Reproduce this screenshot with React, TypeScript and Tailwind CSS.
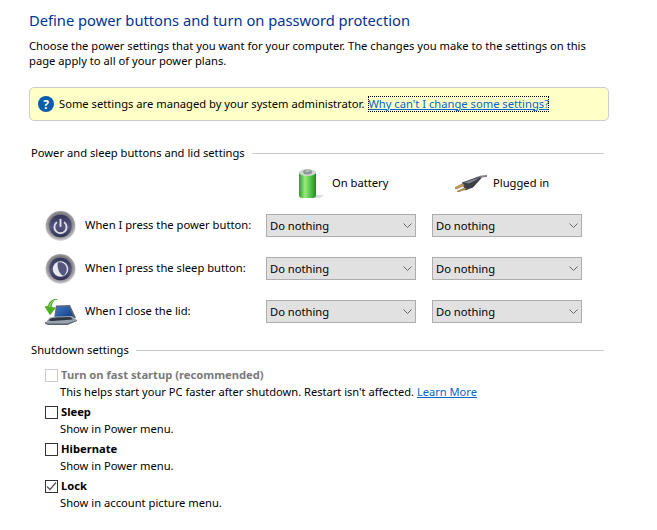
const font = "font-['Noto_Sans','Liberation_Sans',sans-serif]";

function PowerIcon({ moon }: { moon?: boolean }) {
  const id = moon ? "m" : "p";
  return (
    <svg width="31" height="32" viewBox="0 0 32 32" className="shrink-0">
      <defs>
        <radialGradient id={`${id}r`} cx="50%" cy="45%" r="55%">
          <stop offset="65%" stopColor="#77777d" />
          <stop offset="85%" stopColor="#a8a8ac" />
          <stop offset="100%" stopColor="#e4e4e6" />
        </radialGradient>
        <linearGradient id={`${id}d`} x1="0" y1="0" x2="0" y2="1">
          <stop offset="0%" stopColor="#33345a" />
          <stop offset="55%" stopColor="#55577f" />
          <stop offset="100%" stopColor="#2f3052" />
        </linearGradient>
      </defs>
      <circle cx="16" cy="16" r="15.500" fill={`url(#${id}r)`} />
      <circle cx="16" cy="16" r="11.500" fill={`url(#${id}d)`} />
      {moon ? (
        <>
          <circle cx="16" cy="16" r="8" fill="#e8e8ee" />
          <path d="M13 9.500c4-1.500 9 1 9.500 6.500.2 3-1.600 6-3.600 7-2.600-1.200-6.400-5-5.900-13.500z" fill="#55577f" />
        </>
      ) : (
        <g fill="none" stroke="#dcdce6" strokeWidth="2" strokeLinecap="round">
          <path d="M11.700 12.500a6.300 6.300 0 1 0 8.600 0" />
          <path d="M16 9.500v6.500" />
        </g>
      )}
    </svg>
  );
}

function LidIcon() {
  return (
    <svg width="32" height="26" viewBox="0 0 32 26" className="shrink-0">
      <defs>
        <linearGradient id="scr" x1="0" y1="0" x2="1" y2="1">
          <stop offset="0%" stopColor="#3a78c8" />
          <stop offset="100%" stopColor="#123a80" />
        </linearGradient>
      </defs>
      <path d="M11 6.500l14-.5 6 13-22 .5z" fill="#5c6675" />
      <path d="M12.500 8l11.500-.5 4.500 10.500-17.500.5z" fill="url(#scr)" />
      <path d="M5 18.500l6-1 16-.5 5 4-9.500 4.500H3l-3-1.500z" fill="#9aa3ae" />
      <path d="M5.500 19.500l6-1 14-.5 2.500 2.500-21 1.500-3.500-.5z" fill="#2e3540" />
      <path d="M0 23l3 1.500h19.500L32 21v1l-9.500 4H3l-3-1.500z" fill="#59626e" />
      <path d="M12.500 0C8.500.8 6.600 4 6.500 8.500L10.500 8.800l-5.400 7L0 7.500l3.300-.2C3.800 3 7.500-.2 12.500 0z" fill="#4ab31f" stroke="#2f8a10" strokeWidth=".5" />
      <path d="M10.500 1C7 2 5 4.500 4.500 8" stroke="#b4e68a" strokeWidth="1" fill="none" />
    </svg>
  );
}

function BatteryIcon() {
  return (
    <svg width="28" height="32" viewBox="0 0 28 32" className="shrink-0">
      <defs>
        <linearGradient id="bat" x1="0" y1="0" x2="1" y2="0">
          <stop offset="0%" stopColor="#2c9e2c" />
          <stop offset="35%" stopColor="#9ceb7c" />
          <stop offset="70%" stopColor="#4cc044" />
          <stop offset="100%" stopColor="#1f8a24" />
        </linearGradient>
      </defs>
      <path d="M19 28l8 0-4 3h-5z" fill="#dddddd" />
      <rect x="2" y="4" width="17" height="27" rx="3" fill="url(#bat)" />
      <ellipse cx="10.500" cy="5.500" rx="8.500" ry="3.500" fill="#cfd6d3" />
      <ellipse cx="10.500" cy="5" rx="4.500" ry="2.500" fill="#8d9895" />
      <path d="M8.500 2h4v3h-4z" fill="#b5bdba" />
    </svg>
  );
}

function PlugIcon() {
  return (
    <svg width="32" height="17" viewBox="0 0 32 17" className="shrink-0">
      <path d="M20 4c4-2.500 7-3 12-3" stroke="#80838a" strokeWidth="1.800" fill="none" />
      <path d="M7 7.500L21 2.500l6 0-9 10-8 3z" fill="#3c3f48" />
      <path d="M9 7.500l12-4 3 0-10 5z" fill="#83878f" />
      <path d="M0 12.500l8-4 1.500 2-8.500 3.500z" fill="#c9a25a" stroke="#6a5020" strokeWidth=".5" />
      <path d="M2 16.500l8-4 1.500 1.500-8.500 3z" fill="#c9a25a" stroke="#6a5020" strokeWidth=".5" />
    </svg>
  );
}

function Select() {
  return (
    <div className="w-[150px] h-[23px] bg-[#e1e1e1] border border-[#adadad] flex items-center justify-between pl-[3px] pr-[3px] text-[11.2px] text-black">
      <span className="pt-px">Do nothing</span>
      <svg width="9" height="5" viewBox="0 0 9 5" fill="none" stroke="#666" strokeWidth="1"><path d="M.5.500l4 4 4-4" /></svg>
    </div>
  );
}

function Row({ icon, label, mt }: { icon: React.ReactNode; label: string; mt: string }) {
  return (
    <div className={`flex items-center h-[23px] pl-[15px] ${mt}`}>
      <div className="w-[33px] flex justify-center shrink-0">{icon}</div>
      <div className="ml-[8px] w-[181px] text-[11.2px] text-black shrink-0">{label}</div>
      <div className="mr-[16px]"><Select /></div>
      <Select />
    </div>
  );
}

function Heading({ text }: { text: string }) {
  return (
    <div className="flex items-center pl-[2px] h-[17px] text-[11.2px] text-black">
      <span className="whitespace-nowrap">{text}</span>
      <div className="ml-[7px] flex-1 h-px bg-[#c8c8c8]" />
    </div>
  );
}

function Option({ label, desc, checked, disabled, mt }: { label: string; desc: React.ReactNode; checked?: boolean; disabled?: boolean; mt: string }) {
  return (
    <div className={`flex flex-col ${mt}`}>
      <div className="flex items-center h-[17px]">
        <div className={`w-[13px] h-[13px] border flex items-center justify-center ${disabled ? "border-[#cccccc]" : "border-[#333333]"}`}>
          {checked && (
            <svg width="11" height="11" viewBox="0 0 11 11" fill="none" stroke="#555" strokeWidth="1.200"><path d="M1 5.500l3 3 6-7" /></svg>
          )}
        </div>
        <span className={`ml-[3px] text-[11.2px] font-bold ${disabled ? "text-[#7a7a7a]" : "text-black"}`}>{label}</span>
      </div>
      <div className="-mt-px h-[17px] pl-[15px] text-[11.2px] leading-[17px] text-black whitespace-nowrap">{desc}</div>
    </div>
  );
}

export default function App() {
  return (
    <div className={`w-[657px] h-[530px] bg-white overflow-hidden pl-[29px] pt-[9px] ${font}`}>
      <h1 className="text-[14.7px] leading-[22px] text-[#003399] font-normal">Define power buttons and turn on password protection</h1>
      <p className="mt-[7px] w-[580px] text-[11.2px] leading-[15px] text-black">
        Choose the power settings that you want for your computer. The changes you make to the settings on this page apply to all of your power plans.
      </p>
      <div className="mt-[19px] w-[580px] h-[34px] bg-[#ffffc8] border border-[#cccccc] rounded-[5px] flex items-center pl-[8px] text-[11.2px] text-black">
        <svg width="16" height="16" viewBox="0 0 16 16" className="shrink-0">
          <circle cx="8" cy="8" r="8" fill="#0a5cad" />
          <text x="8" y="12.500" textAnchor="middle" fontSize="12" fontWeight="700" fill="#fff" fontFamily="Noto Sans">?</text>
        </svg>
        <span className="ml-[5px]">Some settings are managed by your system administrator.</span>
        <a className="ml-[4px] text-[#0066cc] underline outline-dotted outline-1 outline-black -outline-offset-1">Why can't I change some settings?</a>
      </div>
      <div className="mt-[24px] w-[575px]">
        <Heading text="Power and sleep buttons and lid settings" />
      </div>
      <div className="flex items-center h-[32px] mt-[5px] text-[11.2px] text-black">
        <div className="w-[268px]" />
        <BatteryIcon />
        <span className="ml-[7px] w-[123px]">On battery</span>
        <PlugIcon />
        <span className="ml-[6px]">Plugged in</span>
      </div>
      <div className="mt-[15px]">
        <Row icon={<PowerIcon />} label="When I press the power button:" mt="" />
        <Row icon={<PowerIcon moon />} label="When I press the sleep button:" mt="mt-[20px]" />
        <Row icon={<LidIcon />} label="When I close the lid:" mt="mt-[20px]" />
      </div>
      <div className="mt-[19px] w-[575px]">
        <Heading text="Shutdown settings" />
      </div>
      <div className="pl-[16px] mt-[8px]">
        <Option
          disabled
          mt=""
          label="Turn on fast startup (recommended)"
          desc={<span className="text-[11.1px]">This helps start your PC faster after shutdown. Restart isn't affected. <a className="text-[#0066cc] underline">Learn More</a></span>}
        />
        <Option mt="mt-[4px]" label="Sleep" desc="Show in Power menu." />
        <Option mt="mt-[4px]" label="Hibernate" desc="Show in Power menu." />
        <Option mt="mt-[4px]" checked label="Lock" desc="Show in account picture menu." />
      </div>
    </div>
  );
}
